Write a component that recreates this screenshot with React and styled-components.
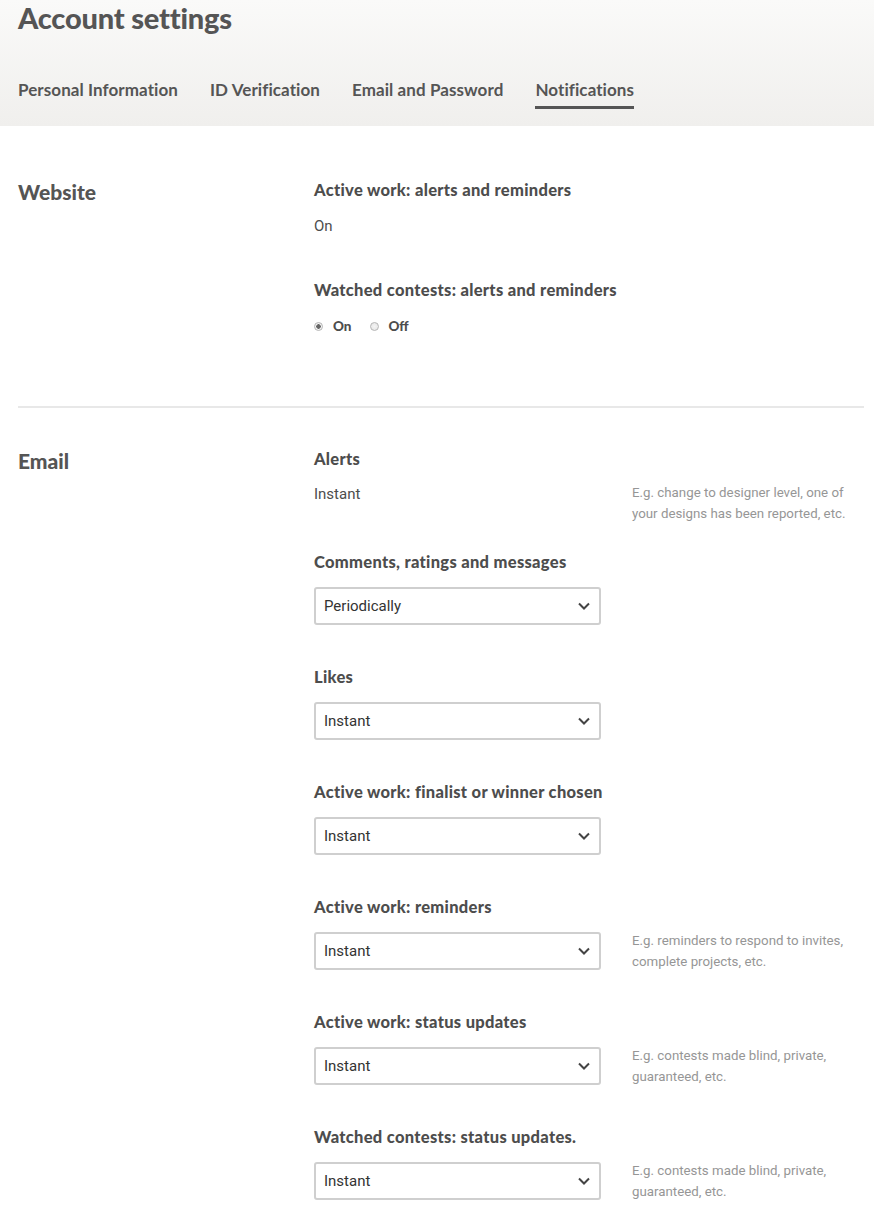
import React from "react";
import styled, { createGlobalStyle } from "styled-components";

const Global = createGlobalStyle`
  html, body { margin: 0; padding: 0; background: #fff; }
  body { font-family: Lato, "Noto Sans", sans-serif; color: #4d4d4d; }
  * { box-sizing: border-box; }
`;

const Header = styled.header`
  background: linear-gradient(#fafaf9, #f0efed);
  padding: 0 18px 17px;
`;

const Title = styled.h1`
  margin: 0;
  font-size: 29px;
  line-height: 36px;
  font-weight: 900;
  color: #555;
  letter-spacing: -0.2px;
`;

const Tabs = styled.nav`
  display: flex;
  gap: 32px;
  margin-top: 44px;
`;

const Tab = styled.a`
  display: block;
  font-size: 17px;
  font-weight: 700;
  line-height: 20px;
  letter-spacing: 0.08px;
  color: #555;
  padding-bottom: 6px;
  border-bottom: 3px solid ${(p) => (p.$active ? "#555" : "transparent")};
  text-decoration: none;
  cursor: pointer;
`;

const Page = styled.main`
  padding: 0 10px 0 18px;
`;

const Section = styled.section`
  display: grid;
  grid-template-columns: 296px 1fr;
  align-items: start;
  padding: ${(p) => p.$pad};
  border-bottom: ${(p) => (p.$divider ? "2px solid #e8e8e8" : "none")};
`;

const SectionTitle = styled.h2`
  margin: 0;
  font-size: 21px;
  font-weight: 900;
  line-height: 24px;
  color: #555;
`;

const Items = styled.div`
  display: flex;
  flex-direction: column;
  gap: ${(p) => p.$gap}px;
`;

const Item = styled.div`
  display: grid;
  grid-template-columns: 318px 1fr;
  grid-template-rows: auto auto;
  row-gap: ${(p) => p.$rowGap || 15}px;
  align-items: start;
  margin-bottom: ${(p) => p.$after || 0}px;
`;

const Label = styled.div`
  grid-column: 1 / span 2;
  font-size: 16.5px;
  font-weight: 900;
  line-height: 20px;
  letter-spacing: 0.3px;
  color: #4d4d4d;
`;

const Control = styled.div`
  grid-column: 1;
  grid-row: 2;
`;

const Value = styled.div`
  font-size: 15px;
  line-height: 20px;
  color: #4d4d4d;
  font-family: Roboto, "Noto Sans", sans-serif;
`;

const Desc = styled.div`
  grid-column: 2;
  grid-row: 2;
  font-size: 13.3px;
  line-height: 21px;
  color: #969696;
  margin: ${(p) => p.$top}px 0 -21px;
  font-family: Roboto, "Noto Sans", sans-serif;
  max-width: 224px;
`;

const RadioRow = styled.div`
  display: flex;
  align-items: center;
  gap: 18px;
  height: 20px;
`;

const RadioLabel = styled.label`
  display: flex;
  align-items: center;
  gap: 10px;
  font-size: 13.5px;
  font-weight: 900;
  color: #4d4d4d;
`;

const RadioDot = styled.span`
  width: 9px;
  height: 9px;
  border-radius: 50%;
  border: 1px solid #b5b5b5;
  background: radial-gradient(circle, ${(p) => (p.$checked ? "#666 0 2px, #f4f4f4 2.5px" : "#f4f4f4 0, #e4e4e4 100%")});
`;

const SelectWrap = styled.div`
  position: relative;
  width: 287px;
`;

const Select = styled.select`
  appearance: none;
  -webkit-appearance: none;
  display: block;
  width: 100%;
  height: 38px;
  border: 2px solid #cfcfcf;
  border-radius: 3px;
  background: #fff;
  padding: 0 30px 0 8px;
  font-family: Roboto, "Noto Sans", sans-serif;
  font-size: 15px;
  color: #333;
  outline: none;
`;

const Chevron = styled.svg`
  position: absolute;
  right: 10px;
  top: 50%;
  transform: translateY(-50%);
  pointer-events: none;
`;

function Dropdown({ value }) {
  return (
    <SelectWrap>
      <Select defaultValue={value}>
        <option>Instant</option>
        <option>Periodically</option>
        <option>Never</option>
      </Select>
      <Chevron width="14" height="9" viewBox="0 0 14 9">
        <path d="M2 2 L7 7 L12 2" fill="none" stroke="#444" strokeWidth="2" />
      </Chevron>
    </SelectWrap>
  );
}

const emailItems = [
  { label: "Comments, ratings and messages", value: "Periodically" },
  { label: "Likes", value: "Instant" },
  { label: "Active work: finalist or winner chosen", value: "Instant" },
  {
    label: "Active work: reminders",
    value: "Instant",
    desc: "E.g. reminders to respond to invites, complete projects, etc.",
  },
  {
    label: "Active work: status updates",
    value: "Instant",
    desc: "E.g. contests made blind, private, guaranteed, etc.",
  },
  {
    label: "Watched contests: status updates.",
    value: "Instant",
    desc: "E.g. contests made blind, private, guaranteed, etc.",
  },
];

export default function App() {
  return (
    <>
      <Global />
      <Header>
        <Title>Account settings</Title>
        <Tabs>
          <Tab>Personal Information</Tab>
          <Tab>ID Verification</Tab>
          <Tab>Email and Password</Tab>
          <Tab $active>Notifications</Tab>
        </Tabs>
      </Header>
      <Page>
        <Section $pad="54px 0 70px" $divider>
          <SectionTitle>Website</SectionTitle>
          <Items $gap={44}>
            <Item $rowGap={16}>
              <Label>Active work: alerts and reminders</Label>
              <Control>
                <Value>On</Value>
              </Control>
            </Item>
            <Item $rowGap={16}>
              <Label>Watched contests: alerts and reminders</Label>
              <Control>
                <RadioRow>
                  <RadioLabel>
                    <RadioDot $checked />
                    On
                  </RadioLabel>
                  <RadioLabel>
                    <RadioDot />
                    Off
                  </RadioLabel>
                </RadioRow>
              </Control>
            </Item>
          </Items>
        </Section>
        <Section $pad="41px 0 20px">
          <SectionTitle>Email</SectionTitle>
          <Items $gap={42}>
            <Item $after={6}>
              <Label>Alerts</Label>
              <Control>
                <Value>Instant</Value>
              </Control>
              <Desc $top={-2}>
                E.g. change to designer level, one of your designs has been reported, etc.
              </Desc>
            </Item>
            {emailItems.map((it) => (
              <Item key={it.label}>
                <Label>{it.label}</Label>
                <Control>
                  <Dropdown value={it.value} />
                </Control>
                {it.desc && <Desc $top={-2}>{it.desc}</Desc>}
              </Item>
            ))}
          </Items>
        </Section>
      </Page>
    </>
  );
}
